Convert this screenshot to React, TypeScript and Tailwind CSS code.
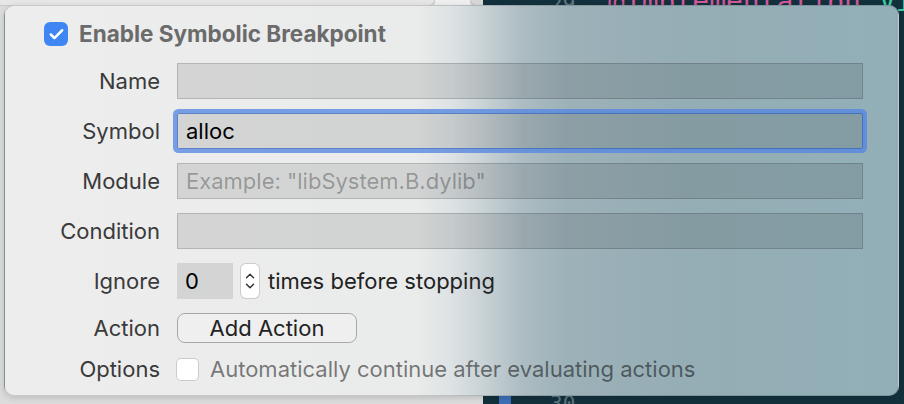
import { Check, ChevronUp, ChevronDown } from "lucide-react";

const FIELDS = [
  { label: "Name", value: "", placeholder: "" },
  { label: "Symbol", value: "alloc", placeholder: "", focused: true },
  { label: "Module", value: "", placeholder: 'Example: "libSystem.B.dylib"' },
  { label: "Condition", value: "", placeholder: "" },
];

function Label({ children }: { children: string }) {
  return <div className="w-[155px] shrink-0 text-right text-[22px] text-[#3a3a3a]">{children}</div>;
}

export default function App() {
  return (
    <div className="relative w-[904px] h-[404px] overflow-hidden bg-[#dcdcdc] font-['Inter',sans-serif]">
      {/* backdrop: sidebar + code editor */}
      <div className="flex h-full">
        <div className="w-[483px] shrink-0 flex flex-col">
          <div className="flex h-[6px]">
            <div className="w-[435px] bg-[#e6e6e6] rounded-br-[8px] border-b border-r border-[#c9c9c9]" />
            <div className="w-[35px] bg-[#efefef]" />
            <div className="flex-1 bg-[#d8d8d8] rounded-bl-[8px] border-b border-l border-[#c4c4c4]" />
          </div>
          <div className="flex-1 bg-[#dcdcdc]" />
        </div>
        <div className="flex-1 min-w-0 overflow-hidden bg-[#12313d] flex flex-col justify-between font-['DejaVu_Sans_Mono',monospace] leading-none whitespace-nowrap">
          <div className="flex items-baseline -mt-[12px] pl-[67px]">
            <span className="w-[58px] shrink-0 text-[21px] text-[#5d7580]">29</span>
            <span className="shrink-0 text-[28px] text-[#d2589b]">@implementation</span>
            <span className="shrink-0 ml-[18px] text-[28px] text-[#3fcb9c]">Vi</span>
          </div>
          <div className="flex items-start -mb-[12px]">
            <div className="ml-[16px] w-[12px] h-[24px] bg-[#3d6fb8]" />
            <span className="ml-[39px] mt-[2px] text-[21px] text-[#5d7580]">30</span>
          </div>
        </div>
      </div>

      {/* popover */}
      <div className="absolute left-[4px] top-[5px] w-[895px] h-[391px] rounded-[10px] border border-black/15 shadow-[0_2px_6px_rgba(0,0,0,0.15)] bg-[linear-gradient(90deg,#ededed_0%,#eaebeb_46%,#dde2e4_50%,#c6d0d4_54%,#acbcc2_58%,#9db1b8_63%,#95adb5_76%,#92afb7_100%)]">
        <div className="flex items-center pl-[39px] pt-[16px] h-[24px] box-content">
          <div className="w-[24px] h-[24px] rounded-[6px] bg-[#4086f2] flex items-center justify-center">
            <Check className="w-[17px] h-[17px] text-white" strokeWidth={3.5} />
          </div>
          <span className="ml-[11px] text-[22.5px] font-bold text-[#6b6b6b]">Enable Symbolic Breakpoint</span>
        </div>

        <div className="flex flex-col gap-[14px] mt-[17px] pr-[35px]">
          {FIELDS.map((f) => (
            <div key={f.label} className="flex items-center gap-[17px] h-[36px]">
              <Label>{f.label}</Label>
              <div
                className={
                  f.focused
                    ? "flex-1 h-full flex items-center px-[8px] bg-black/[0.1] border border-[#2a5fbf]/70 shadow-[0_0_0_4px_rgba(86,134,226,0.78)] rounded-[2px]"
                    : "flex-1 h-full flex items-center px-[8px] bg-black/[0.1] border border-black/15"
                }
              >
                {f.value ? (
                  <span className="text-[22px] text-black">{f.value}</span>
                ) : (
                  <span className="text-[22px] text-black/30">{f.placeholder}</span>
                )}
              </div>
            </div>
          ))}

          <div className="flex items-center gap-[17px] h-[36px]">
            <Label>Ignore</Label>
            <div className="w-[56px] h-full flex items-center px-[8px] bg-black/[0.1] text-[22px] text-black">0</div>
            <div className="ml-[-10px] w-[20px] h-full rounded-[6px] bg-white border border-black/20 flex flex-col items-center justify-center">
              <ChevronUp className="w-[14px] h-[14px] -mb-[2px] text-[#333]" strokeWidth={2.5} />
              <ChevronDown className="w-[14px] h-[14px] -mt-[2px] text-[#333]" strokeWidth={2.5} />
            </div>
            <span className="ml-[-9px] text-[22px] text-[#222]">times before stopping</span>
          </div>

          <div className="flex items-center gap-[17px] h-[30px]">
            <Label>Action</Label>
            <div className="w-[180px] h-full rounded-[8px] border-[1.5px] border-[#a8a8a8] bg-white/20 flex items-center justify-center text-[22px] text-[#222]">
              Add Action
            </div>
          </div>

          <div className="flex items-center gap-[17px] h-[24px]">
            <Label>Options</Label>
            <div className="flex items-center gap-[11px] -ml-[1px]">
              <div className="w-[23px] h-[23px] rounded-[5px] bg-white border border-black/20" />
              <span className="text-[22px] text-black/50">Automatically continue after evaluating actions</span>
            </div>
          </div>
        </div>
      </div>
    </div>
  );
}
